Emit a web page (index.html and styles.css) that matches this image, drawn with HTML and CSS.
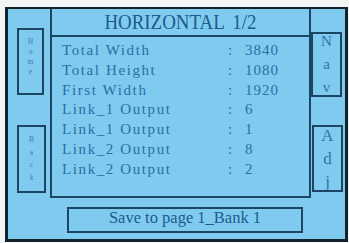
FILE: index.html
```html
<!DOCTYPE html>
<html>
<head>
<meta charset="utf-8">
<link rel="stylesheet" href="styles.css">
</head>
<body>
<div class="screen">
  <div class="top">
    <div class="side side-left">
      <div class="key key-home"><span>H</span><span>o</span><span>m</span><span>e</span></div>
      <div class="key key-back"><span>B</span><span>a</span><span>c</span><span>k</span></div>
    </div>
    <div class="panel">
      <div class="title"><span class="title-text">HORIZONTAL 1/2</span></div>
      <div class="rows">
        <div class="row"><span class="label">Total Width</span><span class="colon">:</span><span class="value">3840</span></div>
        <div class="row"><span class="label">Total Height</span><span class="colon">:</span><span class="value">1080</span></div>
        <div class="row"><span class="label">First Width</span><span class="colon">:</span><span class="value">1920</span></div>
        <div class="row"><span class="label">Link_1 Output</span><span class="colon">:</span><span class="value">6</span></div>
        <div class="row"><span class="label">Link_1 Output</span><span class="colon">:</span><span class="value">1</span></div>
        <div class="row"><span class="label">Link_2 Output</span><span class="colon">:</span><span class="value">8</span></div>
        <div class="row"><span class="label">Link_2 Output</span><span class="colon">:</span><span class="value">2</span></div>
      </div>
    </div>
    <div class="side side-right">
      <div class="key key-nav"><span>N</span><span>a</span><span>v</span></div>
      <div class="key key-adj"><span>A</span><span>d</span><span>j</span></div>
    </div>
  </div>
  <div class="bottom">
    <div class="save">Save to page 1_Bank 1</div>
  </div>
</div>
</body>
</html>
```
FILE: styles.css
```css
* { box-sizing: border-box; }
html, body { margin: 0; padding: 0; }
body {
  background: #f3f4f4;
  width: 349px;
  height: 243px;
  overflow: hidden;
  font-family: "Liberation Serif", serif;
}
.screen {
  margin: 7px 0 0 5px;
  width: 343px;
  height: 235px;
  border: 3px solid #12222e;
  border-top-width: 2px;
  background: #7ecbef;
  display: flex;
  flex-direction: column;
}
.top {
  display: grid;
  grid-template-columns: 42px 261px 34px;
  height: 189px;
}
.side {
  display: flex;
  flex-direction: column;
}
.side-left { padding-left: 9px; }
.key {
  border: 2px solid #1b4563;
  display: flex;
  flex-direction: column;
  align-items: center;
  overflow: hidden;
  font-family: "Liberation Serif", serif;
}
.key span { display: block; }
.key-home {
  margin-top: 19px;
  width: 27px;
  height: 67px;
  padding-top: 7px;
  font-size: 7.5px;
  line-height: 10px;
  color: #3a80b4;
}
.key-back {
  margin-top: 30px;
  width: 29px;
  height: 68px;
  padding-top: 7px;
  font-size: 7.5px;
  line-height: 12.5px;
  color: #3a80b4;
}
.key-nav {
  margin-top: 23px;
  width: 31px;
  height: 65px;
  padding-top: 0;
  gap: 8px;
  font-size: 15px;
  line-height: 15px;
  color: #3273a8;
}
.key-adj {
  margin-top: 28px;
  margin-left: 1px;
  width: 31px;
  height: 67px;
  padding-top: 0;
  gap: 6px;
  font-size: 17px;
  line-height: 17px;
  color: #3273a8;
}
.panel {
  border-left: 2px solid #1b4563;
  border-right: 2px solid #1b4563;
  border-bottom: 2px solid #1b4563;
}
.title {
  height: 28px;
  border-bottom: 2px solid #1b4563;
  text-align: center;
  line-height: 26px;
  font-size: 22px;
  color: #205a8c;
  white-space: nowrap;
}
.title-text {
  display: inline-block;
  transform: scaleX(0.86);
  word-spacing: 4px;
}
.rows {
  padding: 4px 0 0 10px;
  font-family: "Liberation Serif", serif;
  font-size: 15px;
  line-height: 19.8px;
  color: #2b6ea6;
}
.row {
  display: grid;
  grid-template-columns: 166px 17px auto;
  white-space: nowrap;
}
.label { letter-spacing: 1.6px; }
.value { letter-spacing: 1px; }
.bottom {
  flex: 1;
  padding: 9px 0 0 59px;
}
.save {
  width: 236px;
  height: 26px;
  border: 2px solid #1b4563;
  text-align: center;
  font-size: 16.5px;
  line-height: 17px;
  color: #205a8c;
  white-space: nowrap;
}
```
